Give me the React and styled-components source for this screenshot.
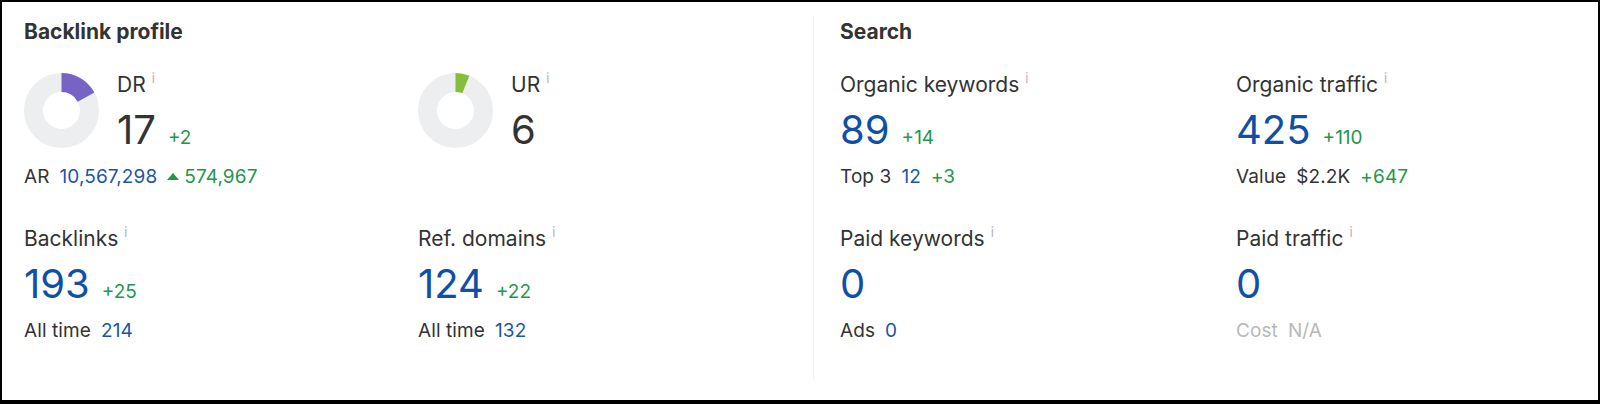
import React from "react";
import styled, { createGlobalStyle } from "styled-components";

const GlobalStyle = createGlobalStyle`
  html, body {
    margin: 0;
    padding: 0;
    background: #fff;
  }
  body {
    font-family: Inter, "Noto Sans", "Liberation Sans", sans-serif;
    color: #333;
  }
`;

/*============= card frame ================*/
const Card = styled.div`
  box-sizing: border-box;
  width: 1600px;
  height: 404px;
  border: solid #000;
  border-width: 2px 2px 4px 2px;
  padding: 15px 0 20px;
  display: flex;
  background: #fff;
`;

const Panel = styled.section`
  display: flex;
  flex-direction: column;
  padding: ${(p) => (p.$divided ? "3px 0 0 26px" : "3px 0 0 22px")};
  border-left: ${(p) => (p.$divided ? "1px solid #f0f1f3" : "none")};
  width: ${(p) => (p.$divided ? "auto" : "789px")};
  flex: ${(p) => (p.$divided ? "1" : "none")};
`;

const Title = styled.h2`
  margin: 0 0 28px;
  font-size: 21px;
  line-height: 24px;
  font-weight: 700;
  color: #333;
`;

const Grid = styled.div`
  display: grid;
  grid-template-columns: ${(p) => p.$first}px 1fr;
  row-gap: 37px;
`;

/*============= metric block ================*/
const Metric = styled.div`
  display: flex;
  flex-direction: column;
`;

const Top = styled.div`
  display: flex;
  align-items: flex-start;
  gap: 18px;

  svg {
    margin-top: 1px;
    flex: none;
  }
`;

const Stack = styled.div`
  display: flex;
  flex-direction: column;
`;

const Label = styled.div`
  font-size: 21px;
  line-height: 25px;
  color: #333;
  white-space: nowrap;
`;

const Info = styled.span`
  display: inline-block;
  vertical-align: top;
  margin-left: 6px;
  font-size: 13px;
  line-height: 13px;
  color: #b3b3b3;
`;

const ValueRow = styled.div`
  display: flex;
  align-items: baseline;
  gap: 12px;
  margin-top: 9px;
`;

const BigNumber = styled.span`
  font-size: 40px;
  line-height: 48px;
  color: ${(p) => (p.$plain ? "#333" : "#0f50a6")};
`;

const Delta = styled.span`
  font-size: 19px;
  color: #23984b;
`;

const Sub = styled.div`
  display: flex;
  align-items: center;
  margin-top: 11px;
  font-size: 19px;
  line-height: 24px;
  letter-spacing: 0.1px;
  color: ${(p) => (p.$muted ? "#b8b8b8" : "#333")};
  white-space: nowrap;
`;

const SubValue = styled.span`
  color: ${(p) => (p.$muted ? "#b8b8b8" : p.$dark ? "#333" : "#1a56a8")};
  margin-left: 10px;
`;

const SubDelta = styled.span`
  color: #23984b;
  margin-left: 10px;
  display: inline-flex;
  align-items: center;
  gap: 5px;
`;

const Arrow = styled.span`
  width: 0;
  height: 0;
  border-left: 6px solid transparent;
  border-right: 6px solid transparent;
  border-bottom: 7px solid #23984b;
  margin-bottom: 2px;
`;

const Donut = ({ value, color }) => {
  const r = 28;
  const c = 2 * Math.PI * r;
  return (
    <svg width="75" height="75" viewBox="0 0 75 75">
      <circle cx="37.5" cy="37.5" r={r} fill="none" stroke="#eceef0" strokeWidth="19" />
      <circle
        cx="37.5"
        cy="37.5"
        r={r}
        fill="none"
        stroke={color}
        strokeWidth="19"
        strokeDasharray={`${(value / 100) * c} ${c}`}
        transform="rotate(-90 37.5 37.5)"
      />
    </svg>
  );
};

const Head = ({ children }) => (
  <Label>
    {children}
    <Info>i</Info>
  </Label>
);

const App = () => {
  return (
    <>
      <GlobalStyle />
      <Card>
        <Panel>
          <Title>Backlink profile</Title>
          <Grid $first={394}>
            <Metric>
              <Top>
                <Donut value={17} color="#7763c6" />
                <Stack>
                  <Head>DR</Head>
                  <ValueRow>
                    <BigNumber $plain>17</BigNumber>
                    <Delta>+2</Delta>
                  </ValueRow>
                </Stack>
              </Top>
              <Sub>
                AR
                <SubValue>10,567,298</SubValue>
                <SubDelta>
                  <Arrow />
                  574,967
                </SubDelta>
              </Sub>
            </Metric>
            <Metric>
              <Top>
                <Donut value={6} color="#86bd3a" />
                <Stack>
                  <Head>UR</Head>
                  <ValueRow>
                    <BigNumber $plain>6</BigNumber>
                  </ValueRow>
                </Stack>
              </Top>
            </Metric>
            <Metric>
              <Head>Backlinks</Head>
              <ValueRow>
                <BigNumber>193</BigNumber>
                <Delta>+25</Delta>
              </ValueRow>
              <Sub>
                All time<SubValue>214</SubValue>
              </Sub>
            </Metric>
            <Metric>
              <Head>Ref. domains</Head>
              <ValueRow>
                <BigNumber>124</BigNumber>
                <Delta>+22</Delta>
              </ValueRow>
              <Sub>
                All time<SubValue>132</SubValue>
              </Sub>
            </Metric>
          </Grid>
        </Panel>
        <Panel $divided>
          <Title>Search</Title>
          <Grid $first={396}>
            <Metric>
              <Head>Organic keywords</Head>
              <ValueRow>
                <BigNumber>89</BigNumber>
                <Delta>+14</Delta>
              </ValueRow>
              <Sub>
                Top 3<SubValue>12</SubValue>
                <SubDelta>+3</SubDelta>
              </Sub>
            </Metric>
            <Metric>
              <Head>Organic traffic</Head>
              <ValueRow>
                <BigNumber>425</BigNumber>
                <Delta>+110</Delta>
              </ValueRow>
              <Sub>
                Value<SubValue $dark>$2.2K</SubValue>
                <SubDelta>+647</SubDelta>
              </Sub>
            </Metric>
            <Metric>
              <Head>Paid keywords</Head>
              <ValueRow>
                <BigNumber>0</BigNumber>
              </ValueRow>
              <Sub>
                Ads<SubValue>0</SubValue>
              </Sub>
            </Metric>
            <Metric>
              <Head>Paid traffic</Head>
              <ValueRow>
                <BigNumber>0</BigNumber>
              </ValueRow>
              <Sub $muted>
                Cost<SubValue $muted>N/A</SubValue>
              </Sub>
            </Metric>
          </Grid>
        </Panel>
      </Card>
    </>
  );
};

export default App;
